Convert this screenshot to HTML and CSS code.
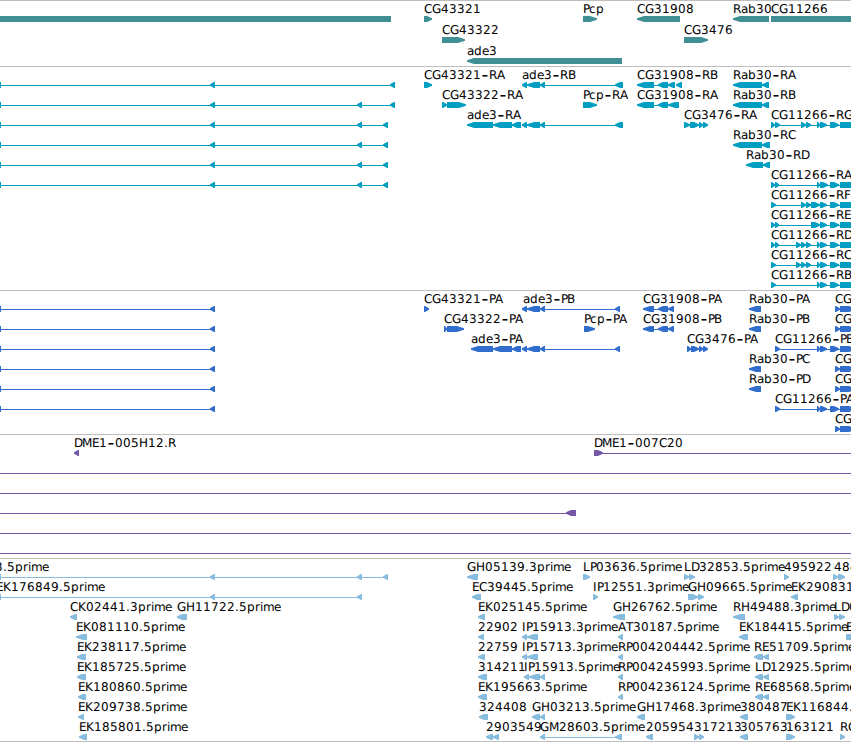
FILE: index.html
```html
<!DOCTYPE html>
<html lang="en">
<head>
    <meta charset="UTF-8">
    <title>Genome Browser</title>
    <link rel="stylesheet" href="styles.css">
</head>
<body>
    <div class="browser" id="browser"></div>
    <script src="tracks.js"></script>
</body>
</html>
```

FILE: styles.css
```css
body {
    margin: 0;
    background: #fff;
    overflow: hidden;
}
.browser {
    display: flex;
    flex-direction: column;
    width: 851px;
    border-bottom: 1px solid #bebebe;
}
.track {
    box-sizing: border-box;
    border-top: 1px solid #bebebe;
}
.track svg {
    display: block;
    width: 851px;
    height: 100%;
    overflow: visible;
}
.track text {
    font-family: "DejaVu Sans", sans-serif;
    font-size: 12px;
    fill: #000;
    text-rendering: geometricPrecision;
}
.track .dash {
    font-size: 19px;
}
.gene {
    height: 66px;
    fill: #3f8f95;
}
.transcript {
    height: 224px;
    fill: #009fc1;
}
.protein {
    height: 144px;
    fill: #316dcd;
}
.clone {
    height: 124px;
    fill: #7557a8;
}
.est {
    height: 183px;
    fill: #88bcde;
}
```

FILE: tracks.js
```js
// Row: [labels, glyphs]
// labels: "x:text", glyphs: "<" / ">" exon with direction, "=" block, "-" intron line
const LEFT = '=0:1 <210:215';
const CG = ' >830:839 >840:860 -771:851';
const ADE = '<522:527 <527:540 <540:545 -545:615';

const tracks = [
    { type: 'gene', step: 21, rows: [
        ['424:CG43321 583:Pcp 637:CG31908 733:Rab30 771:CG11266', '=0:391 >424:432 >583:597 <637:680 <733:769 =771:851'],
        ['442:CG43322 684:CG3476', '>442:465 >684:708'],
        ['467:ade3', '<467:622']
    ]},
    { type: 'transcript', step: 20, rows: [
        ['424:CG43321-RA 522:ade3-RB 637:CG31908-RB 733:Rab30-RA', LEFT + ' -0:395 <390:395 >424:432 ' + ADE + ' <615:623 <637:654 -654:660 <658:668 <668:675 <676:682 <733:762 <762:769'],
        ['442:CG43322-RA 583:Pcp-RA 637:CG31908-RA 733:Rab30-RB', LEFT + ' -0:395 <357:362 <390:395 >442:447 >447:466 >583:597 <637:654 -654:660 <658:668 <668:679 <733:762 <762:769'],
        ['467:ade3-RA 684:CG3476-RA 771:CG11266-RG', LEFT + ' -0:388 <357:362 <383:388 <467:493 <493:512 <512:521 ' + ADE + ' <615:623 >684:690 >690:699 >699:703 >703:708 >771:775 >775:780 >801:806 >806:811 >817:820 >820:827' + CG],
        ['733:Rab30-RC', LEFT + ' -0:388 <357:362 <383:388 <733:762 <762:770'],
        ['746:Rab30-RD', LEFT + ' -0:388 <357:362 <383:388 <746:763 <763:770'],
        ['771:CG11266-RA', LEFT + ' -0:388 <357:362 <383:388 >771:775 >775:779 >817:820 >820:828' + CG],
        ['771:CG11266-RF', '>771:776 >801:806 >806:811 >811:820 >820:827' + CG],
        ['771:CG11266-RE', '>771:775 >775:779 >811:820 >820:827' + CG],
        ['771:CG11266-RD', '>771:775 >775:779 >796:801 >801:806 >806:811 >817:820 >820:827' + CG],
        ['771:CG11266-RC', '>771:776 >796:801 >801:806 >806:811 >817:820 >820:827' + CG],
        ['771:CG11266-RB', '>771:776 >817:820 >820:827' + CG]
    ]},
    { type: 'protein', step: 20, rows: [
        ['424:CG43321-PA 523:ade3-PB 643:CG31908-PA 749:Rab30-PA 835:CG', LEFT + ' -0:215 >424:429 ' + ADE + ' <615:620 <643:654 -654:660 <658:668 <668:674 <749:761 >835:840 >840:856'],
        ['444:CG43322-PA 584:Pcp-PA 643:CG31908-PB 749:Rab30-PB 835:CG', LEFT + ' -0:215 >444:447 >447:464 >584:595 <643:654 -654:660 <658:668 <668:674 <749:761 >835:840 >840:856'],
        ['471:ade3-PA 687:CG3476-PA 775:CG11266-PB', LEFT + ' -0:215 <471:493 <493:512 <512:521 ' + ADE + ' <615:620 >687:691 >691:699 >699:703 >703:708 >775:780 -780:851 >817:820 >820:827 >830:839 >840:856'],
        ['749:Rab30-PC 835:CG', LEFT + ' -0:215 <749:761 >835:840 >840:856'],
        ['749:Rab30-PD 835:CG', LEFT + ' -0:215 <749:761 >835:840 >840:856'],
        ['775:CG11266-PA', LEFT + ' -0:215 >775:780 -780:851 >817:820 >820:827 >830:839 >840:856'],
        ['835:CG', '>835:840 >840:856']
    ]},
    { type: 'clone', step: 20, rows: [
        ['74:DME1-005H12.R 594:DME1-007C20', '<74:79 >594:603 -603:851'],
        ['', '-0:851'],
        ['', '-0:851'],
        ['', '-0:576 <566:576'],
        ['', '-0:851'],
        ['', '-0:851']
    ]},
    { type: 'est', step: 20, rows: [
        ['-5:3.5prime 467:GH05139.3prime 583:LP03636.5prime 684:LD32853.5prime 784:495922 834:484', LEFT + ' -0:388 <357:362 <383:388 <467:478 >583:590 >684:689 >689:695 >784:789 >833:838 >838:845'],
        ['-4:EK176849.5prime 472:EC39445.5prime 593:IP12551.3prime 688:GH09665.5prime 791:EK290831.5prime', LEFT + ' -0:362 <357:362 <472:481 >593:598 >688:698 >698:704 <791:798'],
        ['70:CK02441.3prime 177:GH11722.5prime 478:EK025145.5prime 613:GH26762.5prime 733:RH49488.3prime 834:LD0', '<70:77 <177:187 <478:485 <613:625 <733:745 >834:839 >839:845'],
        ['76:EK081110.5prime 478:22902 522:IP15913.3prime 618:AT30187.5prime 739:EK184415.5prime 846:E', '<76:87 <478:484 <522:527 <527:538 <618:623 <739:748 >846:856'],
        ['77:EK238117.5prime 478:22759 522:IP15713.3prime 618:RP004204442.5prime 754:RE51709.5prime', '<77:86 <478:485 <522:527 <527:538 <618:623 <754:763 <763:769'],
        ['77:EK185725.5prime 478:314211 524:IP15913.5prime 618:RP004245993.5prime 755:LD12925.5prime', '<77:86 <478:487 <524:529 <529:540 <540:545 <618:623 <755:763 <763:769'],
        ['78:EK180860.5prime 478:EK195663.5prime 618:RP004236124.5prime 755:RE68568.5prime', '<78:86 <478:487 <618:623 <755:763 <763:769'],
        ['78:EK209738.5prime 479:324408 532:GH03213.5prime 637:GH17468.3prime 740:380487 786:EK116844.5prime', '<78:84 <479:488 <532:540 <540:545 <637:645 <740:748 >786:795'],
        ['79:EK185801.5prime 486:2903549 540:GM28603.5prime 646:205954 694:317213 740:305763 786:163121 840:RC', '<79:87 <486:493 <493:499 <540:545 -545:615 <615:622 <646:653 >694:699 >699:704 <740:748 >786:795 >840:845']
    ]}
];

// whole-pixel advances, digits and anything else are 8
const advance = { G: 9, E: 7, I: 4, L: 7, P: 6, M: 10, H: 9, T: 7, a: 7, e: 7, c: 7, r: 5, i: 3, m: 11, '.': 4 };

function label(x, y, text) {
    let out = '';
    for (const c of text) {
        if (c === '-') {
            out += `<tspan class="dash" x="${x + 0.5}" y="${y + 1.5}">-</tspan>`;
        } else {
            out += `<tspan x="${x}" y="${y}">${c}</tspan>`;
        }
        x += advance[c] || 8;
    }
    return `<text>${out}</text>`;
}

function glyph(kind, a, b, y) {
    if (kind === '-') return `<rect x="${a}" y="${y + 3}" width="${b - a}" height="1"/>`;
    if (kind === '=') return `<rect x="${a}" y="${y}" width="${b - a}" height="6"/>`;
    const head = Math.min(b - a - 1, b - a > 10 ? 7 : 5);
    const tip = kind === '<' ? a : b;
    const back = kind === '<' ? b : a;
    const neck = kind === '<' ? a + head : b - head;
    return `<polygon points="${tip},${y + 2.3} ${neck},${y} ${back},${y} ${back},${y + 6} ${neck},${y + 6} ${tip},${y + 3.7}"/>`;
}

document.getElementById('browser').innerHTML = tracks.map(track => {
    let out = '';
    track.rows.forEach(([labels, glyphs], i) => {
        const top = i * track.step;
        glyphs.split(' ').forEach(g => {
            const [a, b] = g.slice(1).split(':').map(Number);
            out += glyph(g[0], a, b, top + 15);
        });
        labels.split(' ').filter(Boolean).forEach(l => {
            const [x, text] = l.split(':');
            out += label(Number(x), top + 12, text);
        });
    });
    return `<div class="track ${track.type}"><svg>${out}</svg></div>`;
}).join('');
```
